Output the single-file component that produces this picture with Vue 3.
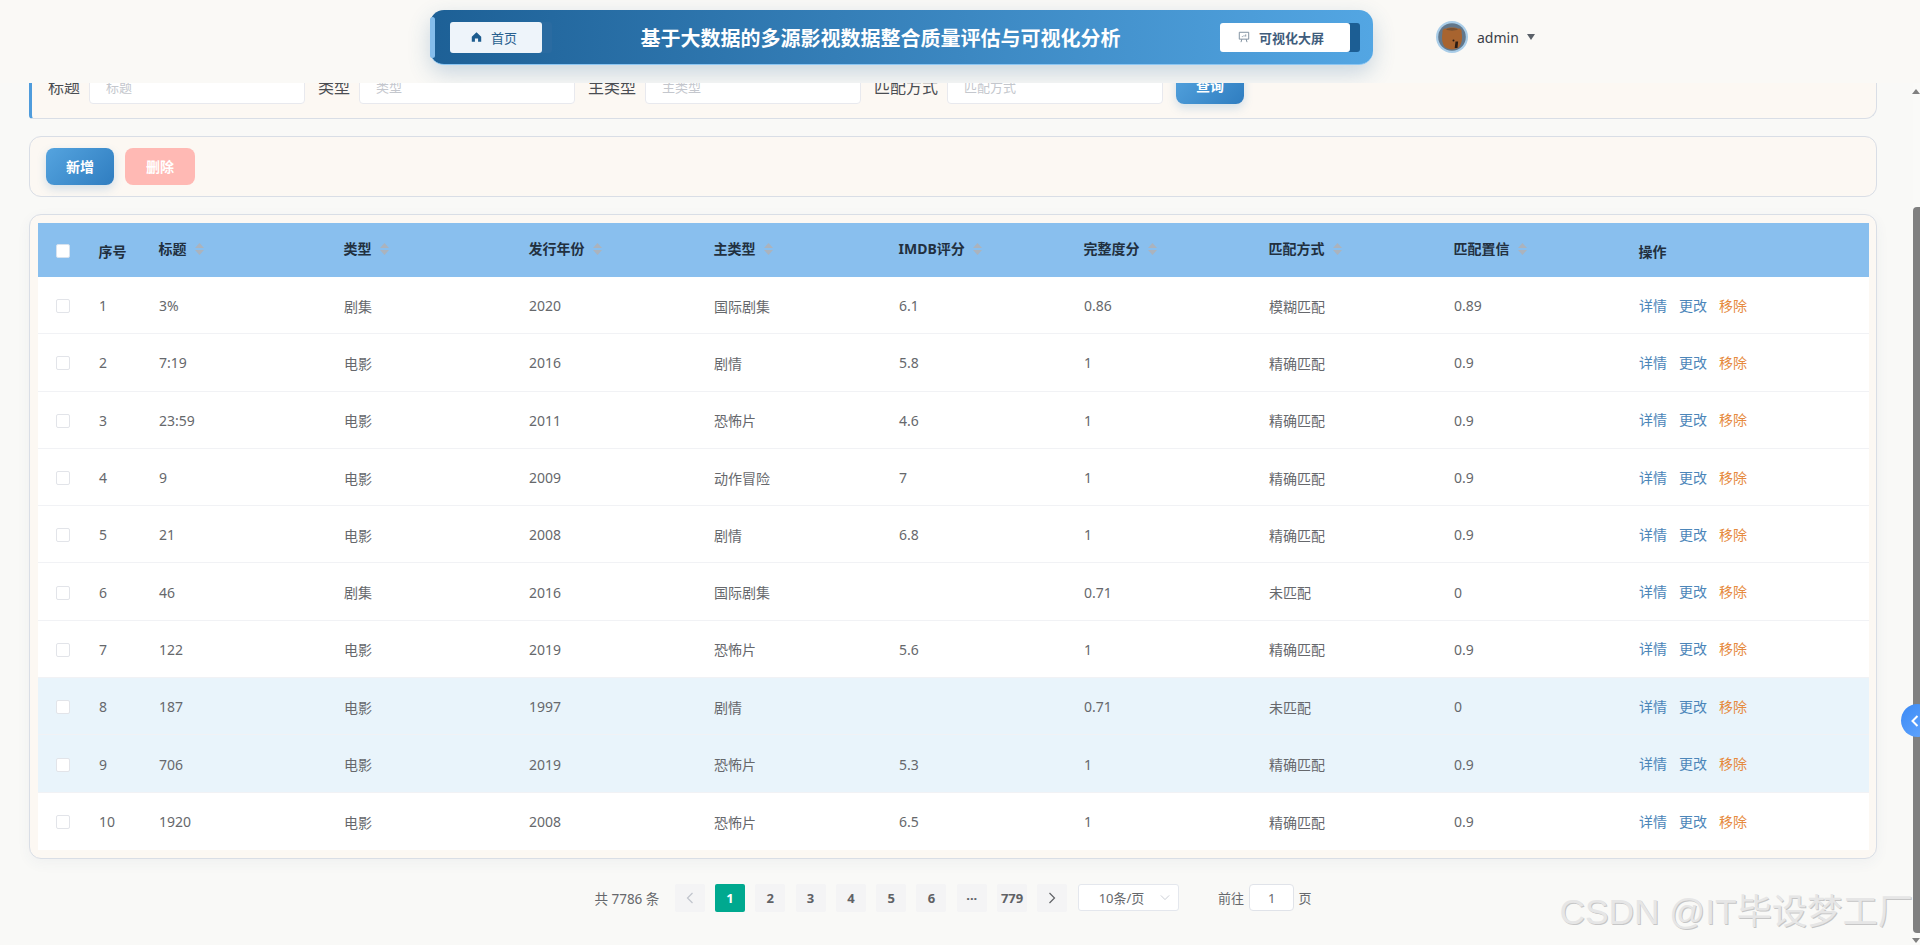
<template>
  <div class="app">

    <!-- Top nav, sits over the scrolled page -->
    <header class="topbar">
      <div class="banner">
        <button class="home-btn">
          <svg class="home-icon" viewBox="0 0 14 14"><path d="M7 1 1 6.600V13h4V9h4v4h4V6.600z" /></svg>
          首页
        </button>
        <h1 class="banner-title">基于大数据的多源影视数据整合质量评估与可视化分析</h1>
        <button class="screen-btn">
          <svg class="screen-icon" viewBox="0 0 14 14">
            <path d="M1.500 1.500h11v8h-11z" />
            <path d="M4.500 9.500 3.500 13M9.500 9.500l1 3.500M4.500 6.500h1M7 5v1.500M9 4v2.500" />
          </svg>
          可视化大屏
        </button>
      </div>
      <div class="user">
        <svg class="avatar" viewBox="0 0 32 32">
          <circle cx="16" cy="16" r="16" fill="#a9cde8" />
          <circle cx="16" cy="16" r="13.800" fill="#62788c" />
          <path d="M6.500 12c-.6-3 1.300-5 3.500-4.300C12 6 20 6 22.300 7.700c2.200-.7 4 1.300 3.300 4.300 1.200 5 0 12-3.100 14.600-3.600 2.400-9.500 2.400-13 0C6.400 24 5.300 17 6.500 12z" fill="#a8642f" />
          <path d="M10 8.500c3-2 9.500-2 12 0-3 1.500-9 1.500-12 0z" fill="#7a5232" />
          <path d="M19.500 20.500h2.600l-.6 6.500h-2.800z" fill="#2a1c14" />
          <circle cx="17.500" cy="19.500" r="1" fill="#2a1c14" />
        </svg>
        <span class="user-name">admin</span>
        <i class="user-caret"></i>
      </div>
    </header>

    <div class="page">
      <main class="content">

        <!-- Search form, top is scrolled out of view -->
        <section class="panel filter-panel">
          <div v-for="f in filters" :key="f" class="filter-item">
            <label class="filter-label">{{ f }}</label>
            <input class="filter-input" :placeholder="f" />
          </div>
          <button class="btn btn-primary btn-query">查询</button>
        </section>

        <section class="panel action-panel">
          <button class="btn btn-primary">新增</button>
          <button class="btn btn-danger">删除</button>
        </section>

        <section class="panel table-panel">
          <div class="grid-row head-row">
            <div class="cell"><span class="check check-head"></span></div>
            <div class="cell head-plain">序号</div>
            <div v-for="h in sortHeads" :key="h" class="cell head-sort">
              {{ h }}
              <svg class="sort-icon" viewBox="0 0 9 12">
                <path d="M4.500 0 9 5H0zM0 7h9l-4.500 5z" />
              </svg>
            </div>
            <div class="cell head-plain">操作</div>
          </div>
          <div
            v-for="(r, i) in rows"
            :key="r[0]"
            class="grid-row body-row"
            :class="{ 'body-row--hl': i === 7 || i === 8 }"
          >
            <div class="cell"><span class="check"></span></div>
            <div class="cell">{{ i + 1 }}</div>
            <div v-for="(v, j) in r" :key="j" class="cell">{{ v }}</div>
            <div class="cell ops">
              <a class="op-blue">详情</a>
              <a class="op-blue">更改</a>
              <a class="op-orange">移除</a>
            </div>
          </div>
        </section>

        <nav class="pager">
          <span class="pager-total">共 7786 条</span>
          <button class="page-btn page-btn--off">
            <svg class="page-arrow" viewBox="0 0 8 12"><path d="M6.500 1 1.500 6l5 5" /></svg>
          </button>
          <button v-for="p in pages" :key="p" class="page-btn" :class="{ 'page-btn--on': p === '1' }">{{ p }}</button>
          <button class="page-btn">
            <svg class="page-arrow" viewBox="0 0 8 12"><path d="M1.500 1l5 5-5 5" /></svg>
          </button>
          <div class="page-size">
            <span>10条/页</span>
            <svg class="size-arrow" viewBox="0 0 12 8"><path d="M1 1.500 6 6.500l5-5" /></svg>
          </div>
          <span class="jump-label">前往</span>
          <div class="jump-input">1</div>
          <span class="jump-unit">页</span>
        </nav>
      </main>

      <!-- Page scrollbar -->
      <aside class="scrollbar">
        <i class="scroll-up"></i>
        <div class="scroll-thumb"></div>
        <i class="scroll-down"></i>
      </aside>
    </div>

    <div class="side-ball">
      <svg class="ball-arrow" viewBox="0 0 10 14"><path d="M7.500 2 2.500 7l5 5" /></svg>
    </div>
    <div class="watermark">CSDN @IT毕设梦工厂</div>
  </div>
</template>

<script setup>
const filters = ['标题', '类型', '主类型', '匹配方式']
const sortHeads = ['标题', '类型', '发行年份', '主类型', 'IMDB评分', '完整度分', '匹配方式', '匹配置信']
const pages = ['1', '2', '3', '4', '5', '6', '···', '779']

const rows = [
  ['3%', '剧集', '2020', '国际剧集', '6.1', '0.86', '模糊匹配', '0.89'],
  ['7:19', '电影', '2016', '剧情', '5.8', '1', '精确匹配', '0.9'],
  ['23:59', '电影', '2011', '恐怖片', '4.6', '1', '精确匹配', '0.9'],
  ['9', '电影', '2009', '动作冒险', '7', '1', '精确匹配', '0.9'],
  ['21', '电影', '2008', '剧情', '6.8', '1', '精确匹配', '0.9'],
  ['46', '剧集', '2016', '国际剧集', '', '0.71', '未匹配', '0'],
  ['122', '电影', '2019', '恐怖片', '5.6', '1', '精确匹配', '0.9'],
  ['187', '电影', '1997', '剧情', '', '0.71', '未匹配', '0'],
  ['706', '电影', '2019', '恐怖片', '5.3', '1', '精确匹配', '0.9'],
  ['1920', '电影', '2008', '恐怖片', '6.5', '1', '精确匹配', '0.9'],
]
</script>

<style>
html, body {
  margin: 0;
  background: #f9f9f7;
  overflow: hidden;
}
</style>

<style scoped>
.app {
  position: relative;
  width: 1920px;
  height: 945px;
  overflow: hidden;
  background: #f9f9f7;
  font-family: "Noto Sans", "Noto Sans CJK SC", sans-serif;
  color: #66686c;
}

/* ── Top bar ─────────────────────────────────────────────── */
.topbar {
  position: relative;
  z-index: 2;
  height: 83px;
  box-sizing: border-box;
  padding: 10px 0 0 430px;
  display: flex;
  align-items: flex-start;
  overflow: hidden;
  background: #faf9f6;
}
.banner {
  position: relative;
  width: 943px;
  height: 55px;
  box-sizing: border-box;
  padding: 0 13px 0 20px;
  display: flex;
  align-items: center;
  border-bottom: 1px solid #8cc6f2;
  border-radius: 14px;
  background: linear-gradient(90deg, #1d6096, #53a6e3);
  box-shadow: 0 8px 22px rgba(40, 100, 150, 0.24);
}
/* light strip on the left edge */
.banner::before {
  content: "";
  position: absolute;
  left: 0;
  top: 7px;
  bottom: 6px;
  width: 5px;
  border-radius: 3px;
  background: #84bdec;
}
.home-btn,
.screen-btn {
  display: flex;
  align-items: center;
  justify-content: center;
  border: 0;
  border-radius: 3px;
  font-family: inherit;
  font-size: 13px;
  flex: none;
}
.home-btn {
  width: 92px;
  height: 31px;
  gap: 9px;
  padding: 0 4px 0 0;
  color: #28608f;
  background: #eef4fa;
  box-shadow: 10px 0 0 #2a6ba1;
}
.home-icon {
  width: 11px;
  height: 12px;
  fill: #1d5c8f;
}
.banner-title {
  flex: 1;
  margin: 0;
  padding-right: 1px;
  text-align: center;
  font-size: 20px;
  font-weight: 700;
  color: #fff;
}
.screen-btn {
  width: 130px;
  height: 29px;
  gap: 9px;
  padding: 0 8px 0 0;
  margin-right: 10px;
  font-weight: 700;
  color: #3f5d7c;
  background: #fff;
  box-shadow: 10px 0 0 #1c5e94;
}
.screen-icon {
  width: 12px;
  height: 14px;
  fill: none;
  stroke: #7c8d9d;
  stroke-width: 1.100;
}
.user {
  margin: 11px 0 0 63px;
  display: flex;
  align-items: center;
}
.avatar {
  width: 32px;
  height: 32px;
}
.user-name {
  margin-left: 9px;
  font-size: 14px;
  color: #3a4048;
}
.user-caret {
  margin-left: 8px;
  border-left: 4px solid transparent;
  border-right: 4px solid transparent;
  border-top: 6px solid #5a6068;
}

/* ── Page ────────────────────────────────────────────────── */
.page {
  height: 862px;
  display: flex;
}
.content {
  flex: 1;
  min-width: 0;
  padding: 0 36px 0 29px;
}
.panel {
  box-sizing: border-box;
  background: #fcf8f3;
  border: 1px solid #d9dee6;
  border-radius: 12px;
}
.filter-panel {
  height: 36px;
  padding: 0 0 14px 16px;
  display: flex;
  align-items: flex-end;
  gap: 13px;
  overflow: hidden;
  border-top: 0;
  border-left: 3px solid #4f9cdc;
  border-radius: 0 0 12px 4px;
}
.filter-item {
  display: flex;
  align-items: center;
  gap: 9px;
}
.filter-label {
  font-size: 16px;
  line-height: 34px;
  color: #4a4d52;
}
.filter-input {
  width: 216px;
  height: 34px;
  box-sizing: border-box;
  padding: 0 16px;
  border: 1px solid #e8e9ee;
  border-radius: 4px;
  background: #fff;
  font-family: inherit;
  font-size: 13px;
}
.filter-input::placeholder {
  color: #c4c7cd;
}
.btn {
  border: 0;
  border-radius: 8px;
  padding: 0 0 2px;
  color: #fff;
  font-family: inherit;
  font-size: 14px;
  font-weight: 700;
}
.btn-primary {
  width: 68px;
  height: 37px;
  background: linear-gradient(135deg, #55a4df, #2f7dc0);
  box-shadow: 0 4px 10px rgba(60, 130, 190, 0.22);
}
.btn-query {
  height: 36px;
  flex: none;
}
.btn-danger {
  width: 70px;
  height: 37px;
  background: #ffb9b4;
}
.action-panel {
  height: 61px;
  margin-top: 17px;
  padding: 0 16px;
  display: flex;
  align-items: center;
  gap: 11px;
}
.table-panel {
  margin-top: 17px;
  padding: 8px 7px 8px 8px;
  box-shadow: 0 4px 14px rgba(60, 80, 110, 0.05);
}

/* ── Table ───────────────────────────────────────────────── */
.grid-row {
  display: grid;
  grid-template-columns: 50px 60px repeat(8, 185px) 1fr;
}
.cell {
  display: flex;
  align-items: center;
  padding: 1px 0 0 11px;
  box-sizing: border-box;
  font-size: 14px;
}
.cell:first-child {
  padding: 2px 0 0 18px;
}
.head-row {
  height: 54px;
  background: #89bfee;
}
.head-row .cell:first-child {
  padding-top: 1px;
}
.head-plain,
.head-sort {
  font-weight: 700;
  color: #22303f;
  font-size: 14px;
  padding-left: 10.500px;
}
.head-plain {
  padding-top: 1px;
}
.head-sort {
  padding-top: 0;
  padding-bottom: 4px;
}
.sort-icon {
  width: 9px;
  height: 12px;
  margin: 2px 0 0 8px;
  fill: #abb3bd;
}
.body-row {
  height: 57.300px;
  box-sizing: border-box;
  background: #fff;
  border-bottom: 1px solid #f1f2f5;
}
.body-row--hl {
  background: #e9f4fb;
}
.body-row:last-child {
  border-bottom: 0;
}
.check {
  width: 14px;
  height: 14px;
  box-sizing: border-box;
  border: 1px solid #e2e4e9;
  border-radius: 2px;
  background: #fff;
}
.check-head {
  border-color: #d6e2ef;
}
.ops {
  gap: 12px;
  padding: 0 0 1px 11px;
}
.op-blue {
  color: #4b86b9;
}
.op-orange {
  color: #e68a3e;
}

/* ── Pagination ──────────────────────────────────────────── */
.pager {
  margin-top: 25px;
  height: 28px;
  display: flex;
  align-items: center;
  justify-content: center;
  font-size: 13px;
  gap: 10.300px;
}
.pager-total {
  font-size: 13.500px;
  margin-right: 5px;
}
.page-btn {
  min-width: 30px;
  height: 28px;
  padding: 0 2px;
  box-sizing: border-box;
  border: 0;
  border-radius: 2px;
  background: #f4f4f5;
  color: #606266;
  font-family: inherit;
  font-size: 13px;
  font-weight: 700;
  display: flex;
  align-items: center;
  justify-content: center;
}
.page-btn--on {
  background: #00a98f;
  color: #fff;
}
.page-arrow {
  width: 8px;
  height: 12px;
  fill: none;
  stroke: #606266;
  stroke-width: 1.200;
}
.page-btn--off .page-arrow {
  stroke: #c0c4cc;
}
.page-size {
  width: 101px;
  height: 27px;
  box-sizing: border-box;
  padding: 0 8px 0 20px;
  display: flex;
  align-items: center;
  justify-content: space-between;
  border: 1px solid #e4e7ed;
  border-radius: 3px;
  background: #fff;
}
.size-arrow {
  width: 10px;
  height: 7px;
  fill: none;
  stroke: #c0c4cc;
}
.jump-label {
  margin-left: 29px;
}
.jump-input {
  width: 45px;
  height: 27px;
  margin-left: -5px;
  box-sizing: border-box;
  display: flex;
  align-items: center;
  justify-content: center;
  border: 1px solid #e0e3e9;
  border-radius: 4px;
  background: #fff;
}
.jump-unit {
  margin-left: -6px;
}

/* ── Scrollbar + overlays ────────────────────────────────── */
.scrollbar {
  width: 7px;
  position: relative;
  background: #fafaf8;
}
.scroll-thumb {
  position: absolute;
  top: 124px;
  bottom: 12px;
  left: 0;
  right: 0;
  background: #808080;
  border-radius: 4px 0 0 4px;
}
.scroll-up,
.scroll-down {
  position: absolute;
  right: 0;
  border-left: 4px solid transparent;
  border-right: 4px solid transparent;
}
.scroll-up {
  top: 6px;
  border-bottom: 5px solid #808080;
}
.scroll-down {
  bottom: 2px;
  border-top: 5px solid #808080;
}
.side-ball {
  position: absolute;
  z-index: 3;
  left: 1901px;
  top: 704px;
  width: 33px;
  height: 33px;
  border-radius: 50%;
  background: linear-gradient(135deg, #3b8af5, #66a8ff);
}
.ball-arrow {
  position: absolute;
  left: 9px;
  top: 10px;
  width: 10px;
  height: 14px;
  fill: none;
  stroke: #fff;
  stroke-width: 2;
}
.watermark {
  position: absolute;
  z-index: 3;
  right: 7px;
  bottom: 13px;
  font-family: "Liberation Sans", "Noto Sans CJK SC", sans-serif;
  font-size: 35.300px;
  line-height: 40px;
  white-space: nowrap;
  color: #e6e6e6;
  text-shadow: 1px 1px 0 #c6c6c6;
  pointer-events: none;
}
</style>
